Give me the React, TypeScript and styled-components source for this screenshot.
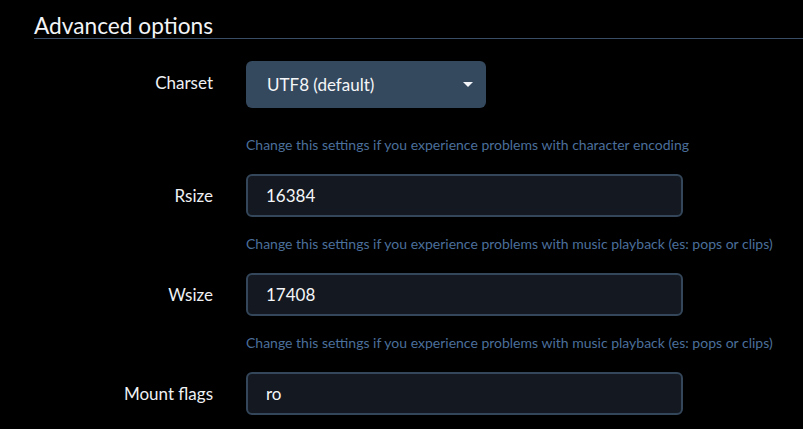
import React from "react";
import styled, { createGlobalStyle } from "styled-components";

const Global = createGlobalStyle`
  html, body { margin: 0; padding: 0; background: #000; }
  body { font-family: Lato, "Noto Sans", sans-serif; color: #e6e9ee; }
  * { box-sizing: border-box; }
`;

const Page = styled.div`
  padding: 13px 0 0 34px;
  width: 803px;
  height: 429px;
  overflow: hidden;
`;

const Heading = styled.h2`
  margin: 0;
  font-size: 22.7px;
  font-weight: 400;
  line-height: 25px;
  color: #f2f4f7;
  border-bottom: 1px solid #3a4d66;
`;

const Form = styled.div`
  margin-top: 22px;
  display: flex;
  flex-direction: column;
  gap: 20px;
`;

const Field = styled.div`
  display: flex;
  flex-direction: column;
`;

const Row = styled.div`
  display: grid;
  grid-template-columns: 179px auto;
  column-gap: 33px;
  align-items: start;
`;

const Label = styled.label`
  text-align: right;
  font-size: 17px;
  line-height: 43px;
  height: 43px;
  color: #eef0f3;
`;

const SelectBox = styled.div`
  position: relative;
  width: 240px;
  height: 47px;
  border-radius: 6px;
  background: #34495e;
  color: #f4f6f8;
  font-size: 17px;
  display: flex;
  align-items: center;
  padding-left: 21px;
`;

const Caret = styled.span`
  position: absolute;
  right: 13px;
  top: 21px;
  width: 0;
  height: 0;
  border-left: 5px solid transparent;
  border-right: 5px solid transparent;
  border-top: 5px solid #f2f4f7;
`;

const Input = styled.div`
  width: 437px;
  height: 43px;
  border: 2px solid #34465a;
  border-radius: 6px;
  background: #141921;
  color: #f4f6f8;
  font-size: 17px;
  display: flex;
  align-items: center;
  padding-left: 18px;
`;

const Help = styled.div<{ $offset: number }>`
  margin-top: ${(p) => p.$offset}px;
  margin-left: 212px;
  font-size: 14px;
  line-height: 18px;
  color: #4b6f9b;
`;

const fields = [
  { label: "Rsize", value: "16384", help: "Change this settings if you experience problems with music playback (es: pops or clips)" },
  { label: "Wsize", value: "17408", help: "Change this settings if you experience problems with music playback (es: pops or clips)" },
  { label: "Mount flags", value: "ro", help: "" },
];

export default function App() {
  return (
    <>
      <Global />
      <Page>
        <Heading>Advanced options</Heading>
        <Form>
          <Field>
            <Row>
              <Label>Charset</Label>
              <SelectBox>
                UTF8 (default)
                <Caret />
              </SelectBox>
            </Row>
            <Help $offset={28}>Change this settings if you experience problems with character encoding</Help>
          </Field>
          {fields.map((f) => (
            <Field key={f.label}>
              <Row>
                <Label>{f.label}</Label>
                <Input>{f.value}</Input>
              </Row>
              {f.help && <Help $offset={18}>{f.help}</Help>}
            </Field>
          ))}
        </Form>
      </Page>
    </>
  );
}
